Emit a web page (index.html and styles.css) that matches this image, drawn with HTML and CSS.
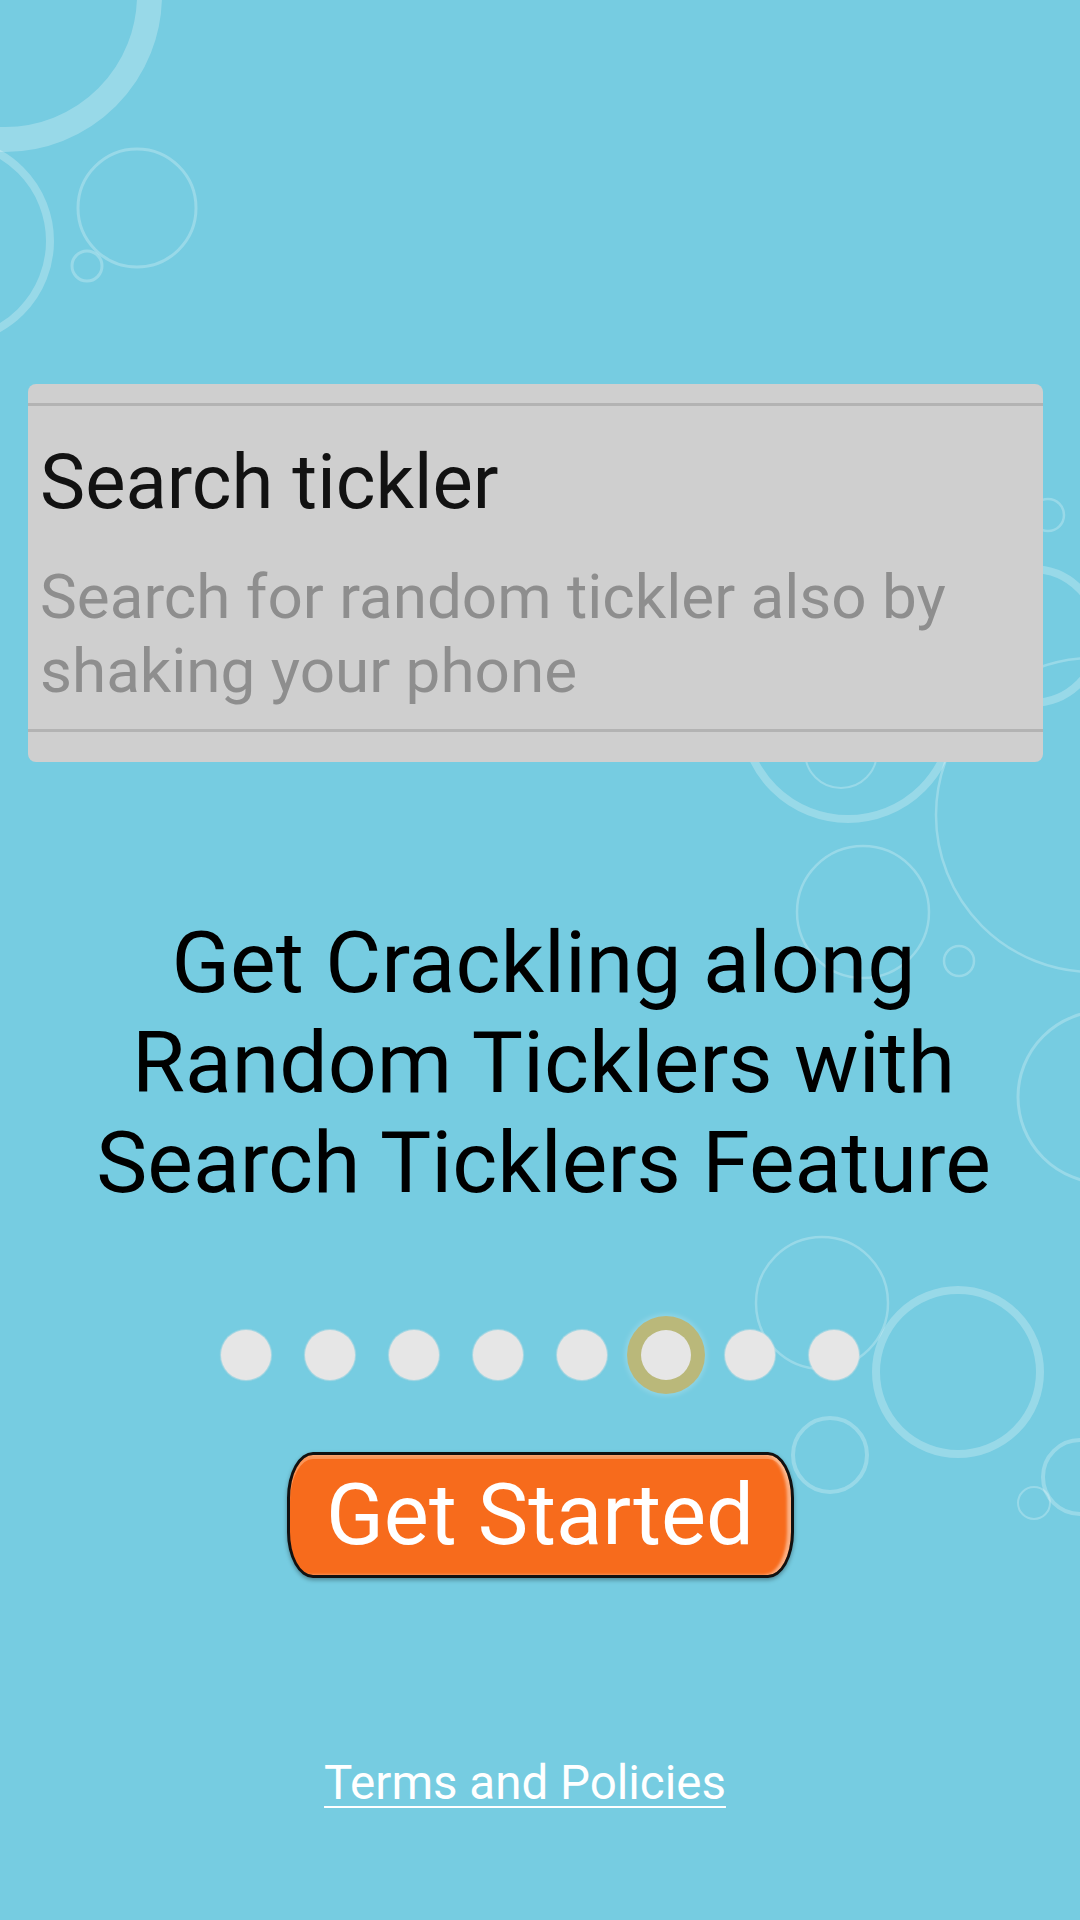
FILE: index.html
```html
<!DOCTYPE html>
<html lang="en">
<head>
<meta charset="utf-8">
<title>Search tickler</title>
<link rel="stylesheet" href="styles.css">
</head>
<body>
<div class="screen">
  <svg class="bubbles" width="1080" height="1920" viewBox="0 0 1080 1920" aria-hidden="true">
    <g fill="none" stroke="rgba(255,255,255,0.25)">
      <circle cx="5" cy="-5" r="144.5" stroke-width="25"/>
      <circle cx="-50" cy="241" r="100" stroke-width="8"/>
      <circle cx="137" cy="208" r="59" stroke-width="3"/>
      <circle cx="87" cy="266" r="15" stroke-width="3"/>
      <circle cx="1048" cy="515" r="16" stroke-width="2.5"/>
      <circle cx="1032" cy="636" r="67" stroke-width="8"/>
      <circle cx="848" cy="714" r="105" stroke-width="8"/>
      <circle cx="841" cy="752" r="36" stroke-width="2"/>
      <circle cx="1093" cy="815" r="157" stroke-width="2.5"/>
      <circle cx="863" cy="912" r="66" stroke-width="2.5"/>
      <circle cx="959" cy="961" r="15" stroke-width="2.5"/>
      <circle cx="1104" cy="1097" r="86" stroke-width="3"/>
      <circle cx="822" cy="1303" r="66" stroke-width="2.5"/>
      <circle cx="958" cy="1372" r="82" stroke-width="8"/>
      <circle cx="830" cy="1455" r="37" stroke-width="4"/>
      <circle cx="1080" cy="1477" r="37" stroke-width="4"/>
      <circle cx="1034" cy="1503" r="16" stroke-width="2"/>
    </g>
  </svg>

  <main class="content">
    <section class="card">
      <div class="card-rule"></div>
      <div class="card-body">
        <h2 class="card-title">Search tickler</h2>
        <p class="card-desc">Search for random tickler also by shaking your phone</p>
      </div>
      <div class="card-rule"></div>
    </section>

    <h1 class="headline">Get Crackling along<br>Random Ticklers with<br>Search Ticklers Feature</h1>

    <div class="dots">
      <span class="dot"></span>
      <span class="dot"></span>
      <span class="dot"></span>
      <span class="dot"></span>
      <span class="dot"></span>
      <span class="dot dot-active"></span>
      <span class="dot"></span>
      <span class="dot"></span>
    </div>

    <button class="start-btn" type="button">Get Started</button>

    <a class="terms" href="#">Terms and Policies</a>
  </main>
</div>
</body>
</html>
```

FILE: styles.css
```css
html, body {
  margin: 0;
  padding: 0;
}

body {
  width: 1080px;
  height: 1920px;
  overflow: hidden;
  font-family: Roboto, "Noto Sans", "Liberation Sans", sans-serif;
}

.screen {
  position: relative;
  width: 1080px;
  height: 1920px;
  background: #76cce1;
  overflow: hidden;
}

.bubbles {
  position: absolute;
  top: 0;
  left: 0;
}

.content {
  position: relative;
  display: flex;
  flex-direction: column;
  padding-top: 384px;
}

.card {
  margin: 0 37px 0 28px;
  background: #cfcfcf;
  border-radius: 8px;
  padding: 19px 0 30px;
}

.card-rule {
  height: 3px;
  background: #b3b3b3;
}

.card-body {
  padding: 31px 12px 21px;
}

.card-title {
  margin: 0;
  font-size: 76px;
  line-height: 90px;
  font-weight: 400;
  color: #121212;
}

.card-desc {
  margin: 33px 0 0;
  font-size: 62px;
  line-height: 74px;
  color: #8e8e8e;
}

.headline {
  margin: 151px 0 0;
  padding-left: 7px;
  font-size: 86px;
  line-height: 100px;
  font-weight: 400;
  color: #000;
  text-align: center;
}

.dots {
  margin-top: 103px;
  height: 78px;
  display: flex;
  align-items: center;
  justify-content: center;
  gap: 34px;
}

.dot {
  width: 50px;
  height: 50px;
  border-radius: 50%;
  background: #e6e6e6;
  box-shadow: 0 0 1px 1px rgba(230, 230, 230, 0.5);
}

.dot-active {
  box-shadow: 0 0 0 14px #bab87a, 0 0 5px 16px rgba(255, 255, 255, 0.2);
}

.start-btn {
  align-self: center;
  margin-top: 58px;
  box-sizing: border-box;
  width: 507px;
  height: 126px;
  display: flex;
  align-items: center;
  justify-content: center;
  padding: 0;
  border: 3px solid #111;
  border-radius: 26px / 46px;
  background: #f76b1c;
  color: #fff;
  font-family: Roboto, "Noto Sans", "Liberation Sans", sans-serif;
  font-size: 85px;
  line-height: normal;
  box-shadow:
    inset 0 4px 0 rgba(255, 200, 160, 0.45),
    inset -4px 0 3px rgba(255, 235, 220, 0.55),
    0 2px 4px rgba(0, 0, 0, 0.35);
}

.terms {
  align-self: center;
  margin: 177px 30px 0 0;
  font-size: 47.5px;
  line-height: normal;
  color: #fff;
  text-decoration: underline;
  text-decoration-thickness: 2px;
  text-underline-offset: 7px;
}
```
